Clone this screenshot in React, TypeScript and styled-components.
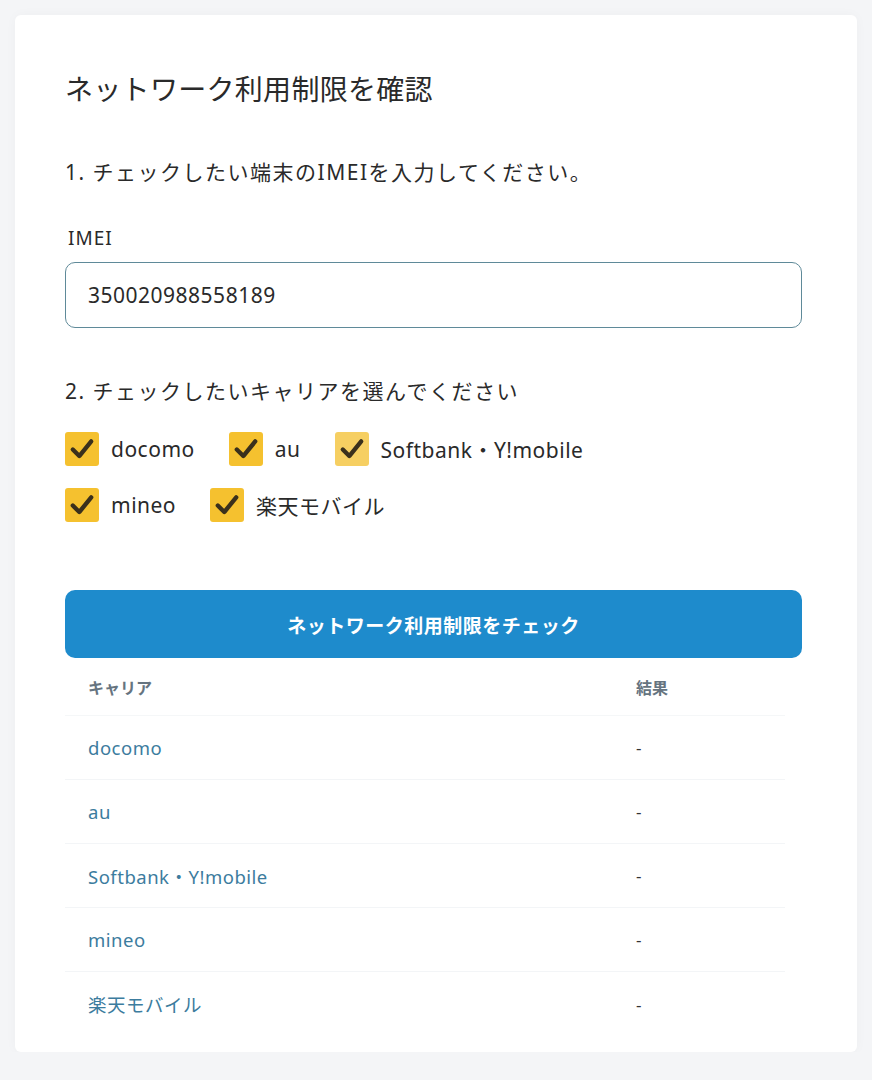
import styled, { createGlobalStyle } from "styled-components";

const GlobalStyle = createGlobalStyle`
  * { box-sizing: border-box; }
  body {
    margin: 0;
    background: #f4f5f7;
    font-family: "Noto Sans", "Noto Sans CJK JP", sans-serif;
    color: #2b2b2b;
  }
`;

const Card = styled.div`
  margin: 15px 15px 0;
  min-height: 1037px;
  background: #fff;
  border-radius: 6px;
  box-shadow: 0 0 12px rgba(0, 0, 0, 0.03);
  padding: 52px 55px 14px 50px;
  display: flex;
  flex-direction: column;
`;

const Title = styled.h1`
  margin: 0;
  font-size: 28px;
  line-height: 42px;
  font-weight: 400;
  letter-spacing: 0.3px;
  color: #2a2a2a;
  font-family: "Noto Sans CJK JP", sans-serif;
`;

const Step = styled.p<{ gap: number }>`
  margin: ${(p) => p.gap}px 0 0;
  font-size: 21px;
  line-height: 30px;
  letter-spacing: 1.5px;
  color: #2a2a2a;
  font-family: "Noto Sans", "Noto Sans CJK JP", sans-serif;
`;

const FieldLabel = styled.label`
  margin-top: 39px;
  font-size: 19px;
  line-height: 24px;
  letter-spacing: 1px;
  color: #2a2a2a;
  padding-left: 3px;
`;

const Input = styled.input`
  margin-top: 12px;
  height: 66px;
  width: 100%;
  border: 1.5px solid #5f8a99;
  border-radius: 10px;
  padding: 0 22px;
  font-size: 21px;
  letter-spacing: 0.5px;
  font-family: "Noto Sans", sans-serif;
  color: #2a2a2a;
  outline: none;
`;

const Carriers = styled.div`
  margin-top: 26px;
  display: flex;
  flex-wrap: wrap;
  column-gap: 34px;
  row-gap: 22px;
  max-width: 580px;
`;

const Option = styled.label`
  display: flex;
  align-items: center;
  gap: 12px;
  font-size: 21px;
  letter-spacing: 0.5px;
  color: #2a2a2a;
  cursor: pointer;
`;

const Box = styled.span<{ light?: boolean }>`
  width: 34px;
  height: 34px;
  border-radius: 3px;
  background: ${(p) => (p.light ? "#f6cf62" : "#f5c12f")};
  display: flex;
  align-items: center;
  justify-content: center;
  flex-shrink: 0;
`;

const Button = styled.button`
  margin-top: 68px;
  height: 68px;
  width: 100%;
  border: none;
  border-radius: 10px;
  background: #1e8bcc;
  color: #fff;
  font-size: 19px;
  font-weight: 700;
  font-family: "Noto Sans CJK JP", sans-serif;
  letter-spacing: 0.5px;
  cursor: pointer;
`;

const Table = styled.div`
  display: flex;
  flex-direction: column;
  width: 720px;
`;

const Row = styled.div<{ head?: boolean }>`
  display: grid;
  grid-template-columns: 548px 1fr;
  align-items: center;
  height: ${(p) => (p.head ? 58 : 64)}px;
  padding-left: 23px;
  border-bottom: 1px solid ${(p) => (p.head ? "#f5f7f8" : "#f3f5f7")};
  &:last-child { border-bottom: none; }
`;

const HeadCell = styled.span`
  font-size: 16px;
  font-weight: 700;
  color: #667480;
  font-family: "Noto Sans CJK JP", sans-serif;
`;

const Name = styled.span`
  font-size: 18.5px;
  letter-spacing: 0.5px;
  color: #3c7c9e;
  font-family: "Noto Sans", "Noto Sans CJK JP", sans-serif;
`;

const Result = styled.span`
  font-size: 17px;
  color: #333;
`;

const Check = () => (
  <svg width="26" height="26" viewBox="0 0 24 24">
    <path
      d="M3.5 12.5 L9.5 18.5 L20.5 5"
      fill="none"
      stroke="#3a301c"
      strokeWidth="4"
      strokeLinecap="round"
      strokeLinejoin="round"
    />
  </svg>
);

const carriers = ["docomo", "au", "Softbank・Y!mobile", "mineo", "楽天モバイル"];

export default function App() {
  return (
    <>
      <GlobalStyle />
      <Card>
        <Title>ネットワーク利用制限を確認</Title>
        <Step gap={48}>1. チェックしたい端末のIMEIを入力してください。</Step>
        <FieldLabel>IMEI</FieldLabel>
        <Input defaultValue="350020988558189" />
        <Step gap={48}>2. チェックしたいキャリアを選んでください</Step>
        <Carriers>
          {carriers.map((c) => (
            <Option key={c}>
              <Box light={c.startsWith("Softbank")}>
                <Check />
              </Box>
              {c}
            </Option>
          ))}
        </Carriers>
        <Button>ネットワーク利用制限をチェック</Button>
        <Table>
          <Row head>
            <HeadCell>キャリア</HeadCell>
            <HeadCell>結果</HeadCell>
          </Row>
          {carriers.map((c) => (
            <Row key={c}>
              <Name>{c}</Name>
              <Result>-</Result>
            </Row>
          ))}
        </Table>
      </Card>
    </>
  );
}
